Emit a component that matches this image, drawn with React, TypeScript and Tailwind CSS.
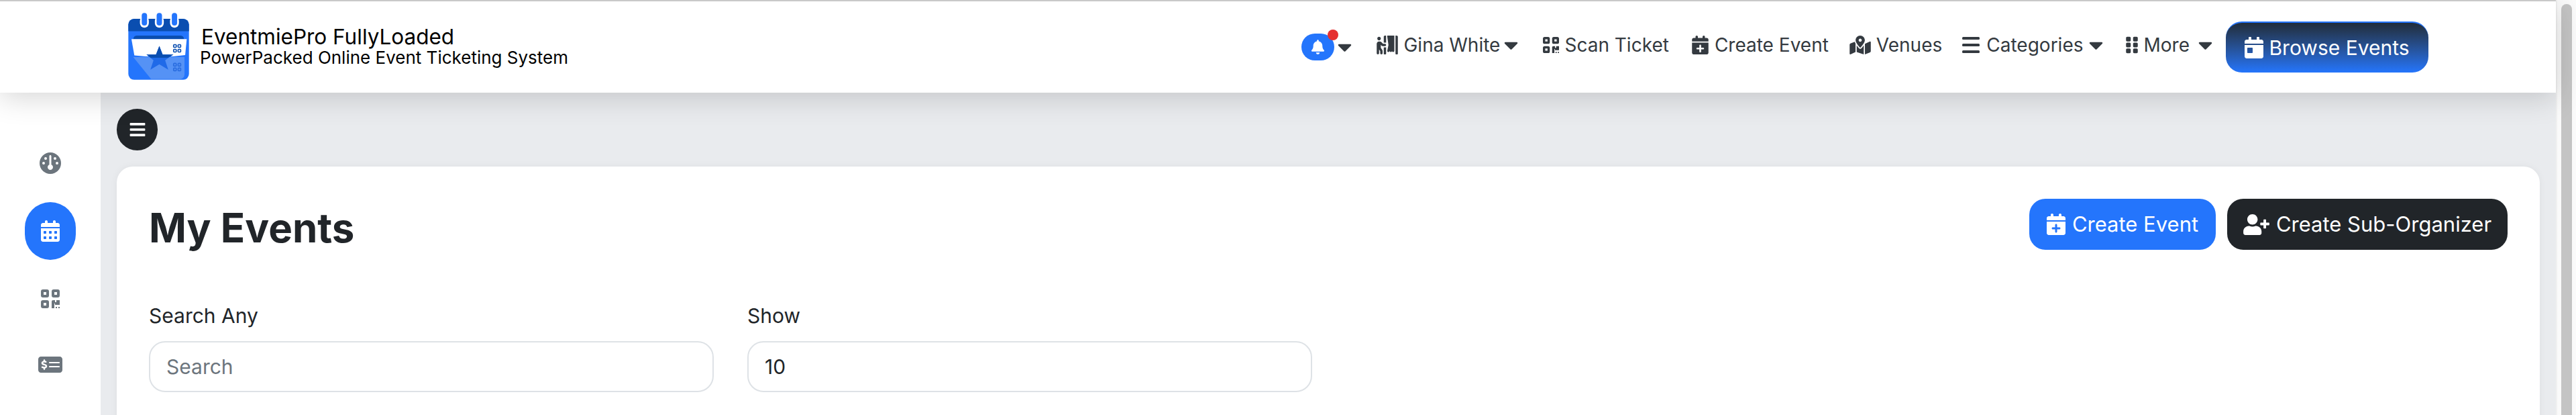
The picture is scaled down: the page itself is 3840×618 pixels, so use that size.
import { FaBell, FaCaretDown, FaPersonBooth, FaMapMarkedAlt, FaGripVertical, FaCalendarDay, FaBars, FaUserPlus } from "react-icons/fa";
import { FaCalendarDays, FaCalendarPlus, FaGauge, FaMoneyCheckDollar } from "react-icons/fa6";

function QrIcon({ className }: { className?: string }) {
  return (
    <svg viewBox="0 0 28 28" className={className} fill="currentColor">
      <path fillRule="evenodd" d="M3 0h6a3 3 0 0 1 3 3v6a3 3 0 0 1-3 3H3a3 3 0 0 1-3-3V3a3 3 0 0 1 3-3Zm1 4v4h4V4H4Z" />
      <path fillRule="evenodd" d="M19 0h6a3 3 0 0 1 3 3v6a3 3 0 0 1-3 3h-6a3 3 0 0 1-3-3V3a3 3 0 0 1 3-3Zm1 4v4h4V4h-4Z" />
      <path fillRule="evenodd" d="M3 16h6a3 3 0 0 1 3 3v6a3 3 0 0 1-3 3H3a3 3 0 0 1-3-3v-6a3 3 0 0 1 3-3Zm1 4v4h4v-4H4Z" />
      <path d="M16 18a2 2 0 0 1 2-2h3v3h2v-3h5v7h-7v-2h-1v7h-4v-10Z" />
      <path d="M22 26h2v2h-2zM26 26h2v2h-2z" />
    </svg>
  );
}

function LinesIcon({ className }: { className?: string }) {
  return (
    <svg viewBox="0 0 26 24" className={className} fill="currentColor">
      <rect x="0" y="0" width="26" height="4" rx="1.5" />
      <rect x="0" y="10" width="26" height="4" rx="1.5" />
      <rect x="0" y="20" width="26" height="4" rx="1.5" />
    </svg>
  );
}

function Logo() {
  return (
    <svg viewBox="33 20 272 304" className="w-[91px] h-[101px] shrink-0 mb-[4px]">
      <rect x="33" y="50" width="272" height="273" rx="26" fill="#2475fc" />
      <path d="M33 76a26 26 0 0 1 26-26h220a26 26 0 0 1 26 26v30H33Z" fill="#0a4eb0" />
      <path d="M70 125h198a14 14 0 0 1 14 16H56a14 14 0 0 1 14-16Z" fill="#0a4eb0" />
      {[105, 172, 240].map((x) => (
        <g key={x}>
          <rect x={x - 20} y="40" width="40" height="50" rx="20" fill="#fff" />
          <rect x={x - 12} y="24" width="24" height="56" rx="12" fill="#2475fc" />
        </g>
      ))}
      <path d="M55 222h230v78a20 20 0 0 1-20 20H135Z" fill="#5592f5" />
      <path d="M47 141h248l-7 72-55 6H110l-50-5Z" fill="#fff" />
      <path d="M172 172l15 38h48l-37 26 14 42-40-24-40 24 14-42-32-26h43Z" fill="#1f6ae8" />
      <path d="M157 210l15-38 15 38h48l-24 15H133l-18-15Z" fill="#0a4eb0" />
      <g fill="none" stroke="#0a4eb0" strokeWidth="5">
        <rect x="236" y="166" width="12" height="12" rx="3" />
        <rect x="256" y="166" width="12" height="12" rx="3" />
        <rect x="236" y="187" width="12" height="12" rx="3" />
        <rect x="256" y="187" width="12" height="12" rx="3" />
      </g>
      <g fill="none" stroke="#2a6de0" strokeWidth="5">
        <rect x="236" y="250" width="12" height="12" rx="3" />
        <rect x="256" y="250" width="12" height="12" rx="3" />
        <rect x="236" y="271" width="12" height="12" rx="3" />
        <rect x="256" y="271" width="12" height="12" rx="3" />
      </g>
    </svg>
  );
}

function Caret({ className }: { className?: string }) {
  return <FaCaretDown className={"w-[21px] h-[34px] shrink-0 " + (className ?? "")} />;
}

function Navbar() {
  return (
    <nav className="relative z-10 h-[138px] shrink-0 flex items-center bg-white border-t-2 border-[#c9c9c9] pl-[191px] pr-[190px] shadow-[0_8px_40px_rgba(0,0,0,0.16)]">
      <div className="flex items-center">
        <Logo />
        <div className="ml-[16px] text-black">
          <div className="text-[31.5px] leading-[32px] ml-[2px]">EventmiePro FullyLoaded</div>
          <div className="text-[26px] leading-[30px]">PowerPacked Online Event Ticketing System</div>
        </div>
      </div>

      <div className="ml-auto flex items-center pb-[6px] text-[28px] leading-[40px] text-[#343a40]">
        <div className="relative flex items-center pt-[6px]">
          <span className="flex items-center justify-center w-[49px] h-[40px] rounded-full bg-[#2475fc] text-white">
            <FaBell className="w-[19px] h-[22px]" />
          </span>
          <span className="absolute left-[39px] top-[0px] w-[16px] h-[16px] rounded-full bg-[#e53030]" />
          <Caret className="ml-[5px]" />
        </div>
        <div className="ml-[37px] flex items-center">
          <FaPersonBooth className="w-[32px] h-[28px]" />
          <span className="ml-[8px]">Gina White</span>
          <Caret className="ml-[6px]" />
        </div>
        <div className="ml-[37px] flex items-center">
          <QrIcon className="w-[24px] h-[24px]" />
          <span className="ml-[8px]">Scan Ticket</span>
        </div>
        <div className="ml-[34px] flex items-center">
          <FaCalendarPlus className="w-[25px] h-[28px]" />
          <span className="ml-[9px]">Create Event</span>
        </div>
        <div className="ml-[31px] flex items-center">
          <FaMapMarkedAlt className="w-[32px] h-[28px]" />
          <span className="ml-[8px]">Venues</span>
        </div>
        <div className="ml-[30px] flex items-center">
          <LinesIcon className="w-[26px] h-[24px]" />
          <span className="ml-[10px]">Categories</span>
          <Caret className="ml-[8px]" />
        </div>
        <div className="ml-[33px] flex items-center">
          <FaGripVertical className="w-[20px] h-[28px]" />
          <span className="ml-[8px]">More</span>
          <Caret className="ml-[13px]" />
        </div>
      </div>
      <button className="ml-[20px] flex items-center justify-center gap-[8px] w-[302px] h-[76px] rounded-[24px] border-t-2 border-[#2475fc] bg-gradient-to-b from-[#212d3b] to-[#2475fc] text-[30px] text-white">
        <FaCalendarDay className="w-[28px] h-[32px]" />
        Browse Events
      </button>
    </nav>
  );
}

function Sidebar() {
  return (
    <aside className="w-[150px] shrink-0 bg-white flex flex-col items-center pt-[89px] text-[#6c757d]">
      <div className="h-[32px] flex items-center">
        <FaGauge className="w-[32px] h-[32px]" />
      </div>
      <div className="mt-[42px] flex items-center justify-center w-[76px] h-[86px] rounded-full bg-[#2475fc] text-white">
        <FaCalendarDays className="w-[28px] h-[32px]" />
      </div>
      <div className="mt-[44px] h-[28px] flex items-center">
        <QrIcon className="w-[28px] h-[28px]" />
      </div>
      <div className="mt-[70px] h-[28px] flex items-center">
        <FaMoneyCheckDollar className="w-[36px] h-[36px] shrink-0" />
      </div>
    </aside>
  );
}

function Field({ label, children }: { label: string; children: React.ReactNode }) {
  return (
    <div className="w-[842px]">
      <label className="block text-[30px] leading-[36px] text-[#212529]">{label}</label>
      <div className="mt-[20px]">{children}</div>
    </div>
  );
}

const inputClass =
  "w-full h-[76px] px-[24px] rounded-[24px] border-2 border-[#dee2e6] bg-white text-[30px] text-[#212529] placeholder:text-[#6c757d] outline-none";

function Card() {
  return (
    <section className="mt-[24px] ml-[24px] mr-[24px] h-[400px] rounded-t-[24px] bg-white shadow-[0_0_12px_rgba(0,0,0,0.05)] pl-[48px] pr-[48px] pt-[48px]">
      <div className="flex items-start justify-between">
        <h1 className="text-[60px] leading-[86px] font-bold text-[#212529]">My Events</h1>
        <div className="flex gap-[17px]">
          <button className="flex items-center justify-center gap-[10px] w-[278px] h-[76px] rounded-[24px] bg-[#2475fc] text-[31px] text-white">
            <FaCalendarPlus className="w-[28px] h-[32px]" />
            Create Event
          </button>
          <button className="flex items-center justify-center gap-[10px] w-[418px] h-[76px] rounded-[24px] bg-[#212529] text-[31px] text-white">
            <FaUserPlus className="w-[39px] h-[31px]" />
            Create Sub-Organizer
          </button>
        </div>
      </div>
      <div className="mt-[70px] flex gap-[50px]">
        <Field label="Search Any">
          <input className={inputClass} placeholder="Search" />
        </Field>
        <Field label="Show">
          <input className={inputClass} defaultValue="10" />
        </Field>
      </div>
    </section>
  );
}

export default function App() {
  return (
    <div className="flex h-[618px] overflow-hidden bg-white font-[Inter,sans-serif]">
      <div className="flex-1 flex flex-col min-w-0">
        <Navbar />
        <div className="flex-1 flex min-h-0">
          <Sidebar />
          <main className="flex-1 min-w-0 bg-[#e9ebee]">
            <button className="mt-[24px] ml-[24px] flex items-center justify-center w-[61px] h-[62px] rounded-full bg-[#212529] text-white">
              <FaBars className="w-[26px] h-[26px]" />
            </button>
            <Card />
          </main>
        </div>
      </div>
      <div className="w-[30px] shrink-0 bg-[#fafafa] border-l-2 border-[#f0f0f0] pl-[6px] pt-[6px]">
        <div className="w-[16px] h-[700px] rounded-full bg-[#c4c4c4]" />
      </div>
    </div>
  );
}
